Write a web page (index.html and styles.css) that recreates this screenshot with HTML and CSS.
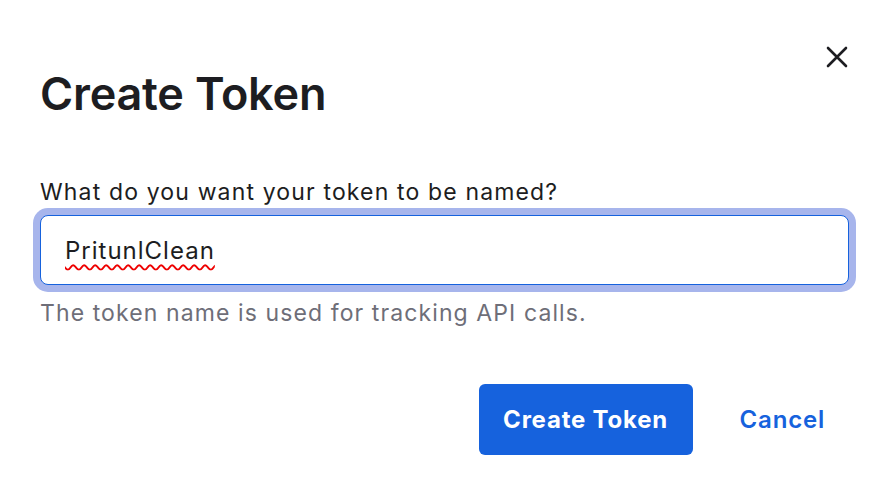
FILE: index.html
```html
<!DOCTYPE html>
<html lang="en">
<head>
<meta charset="utf-8">
<link rel="stylesheet" href="styles.css">
</head>
<body>
<div class="dialog">
  <button class="close" aria-label="Close">
    <svg width="22" height="22" viewBox="0 0 22 22"><path d="M2 2 L20 20 M20 2 L2 20" stroke="#1d1d21" stroke-width="2.6" stroke-linecap="round"/></svg>
  </button>
  <h1 class="title">Create Token</h1>
  <div class="field">
    <label class="label" for="name">What do you want your token to be named?</label>
    <div class="ring">
      <div class="input"><span class="value">PritunlClean</span></div>
    </div>
    <p class="help">The token name is used for tracking API calls.</p>
  </div>
  <div class="actions">
    <button class="primary">Create Token</button>
    <button class="link">Cancel</button>
  </div>
</div>
</body>
</html>
```
FILE: styles.css
```css
* { box-sizing: border-box; }
html, body { margin: 0; padding: 0; background: #fff; }
body { font-family: Inter, "Noto Sans", sans-serif; color: #1d1d21; }
.dialog { position: relative; width: 890px; height: 498px; padding: 68px 40px 0 40px; }
.close { position: absolute; top: 46px; right: 42px; border: 0; background: none; padding: 0; width: 22px; height: 22px; }
.close svg { display: block; }
.title { margin: 0; font-size: 45px; font-weight: 600; line-height: 52px; letter-spacing: -0.2px; }
.field { margin-top: 58px; }
.label { display: block; font-size: 23px; line-height: 28px; letter-spacing: 1.15px; color: #1d1d21; margin-bottom: 2px; }
.ring { margin-left: -7px; padding: 7px; border-radius: 15px; background: #a7b5ec; width: 823px; }
.input { height: 70px; border: 1px solid #1662dd; border-radius: 8px; background: #fff; display: flex; align-items: center; padding-left: 24px; }
.value { font-size: 24px; letter-spacing: 1px; text-decoration: underline wavy #e00; text-decoration-thickness: 1.5px; text-underline-offset: 5px; }
.help { margin: 7px 0 0; font-size: 23px; line-height: 28px; letter-spacing: 1.1px; color: #6e6e78; }
.actions { display: flex; justify-content: flex-end; align-items: center; margin-top: 57px; padding-right: 25px; gap: 47px; }
.primary { width: 214px; height: 71px; border: 0; border-radius: 6px; background: #1662dd; color: #fff; font-family: Inter, sans-serif; font-size: 24px; font-weight: 700; letter-spacing: 0.8px; }
.link { border: 0; background: none; color: #1662dd; font-family: Inter, sans-serif; font-size: 24px; font-weight: 600; letter-spacing: 0.8px; padding: 0; }
```
